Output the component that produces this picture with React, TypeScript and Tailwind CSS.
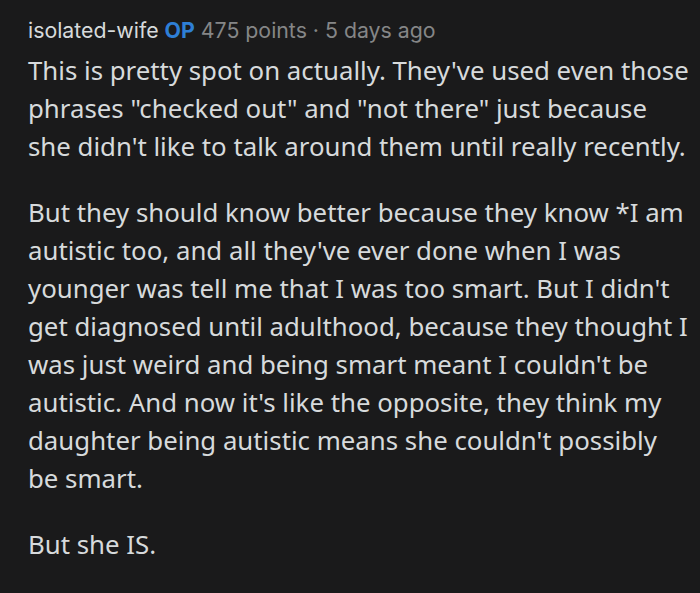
export default function App() {
  return (
    <div className="min-h-[593px] w-[700px] bg-[#1a1a1b] pl-[28px] pr-[10px] pt-[13px] font-['Noto_Sans',sans-serif] text-[#d7dadc]">
      <div className="flex items-baseline gap-[6px] font-['Inter',sans-serif] text-[21.3px] leading-[34px]">
        <span className="text-[#d7dadc]">isolated-wife</span>
        <span className="font-bold text-[#2e7fd6]">OP</span>
        <span className="text-[#858687]">475 points · 5 days ago</span>
      </div>
      <div className="mt-[4px] text-[25.8px] leading-[38px]">
        <p className="mb-[28px]">
          This is pretty spot on actually. They've used even those phrases "checked out" and "not there" just because she didn't like to talk around them until really recently.
        </p>
        <p className="mb-[28px]">
          But they should know better because they know *I am autistic too, and all they've ever done when I was younger was tell me that I was too smart. But I didn't get diagnosed until adulthood, because they thought I was just weird and being smart meant I couldn't be autistic. And now it's like the opposite, they think my daughter being autistic means she couldn't possibly be smart.
        </p>
        <p>But she IS.</p>
      </div>
    </div>
  );
}
